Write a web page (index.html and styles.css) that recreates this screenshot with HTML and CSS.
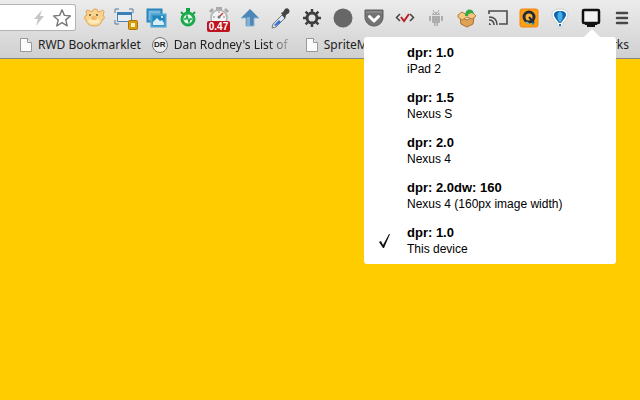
FILE: index.html
```
<!DOCTYPE html>
<html lang="en">
<head>
  <meta charset="UTF-8" />
  <meta name="viewport" content="width=device-width, initial-scale=1.0"/>
  <title>DPR Switcher</title>
  <link rel="stylesheet" href="styles.css">
</head>
<body>
  <header class="chrome">
    <div class="toolbar">
      <div class="omnibox">
        <input class="omnibox-input" type="text" aria-label="Address" />
        <svg width="14" height="18" viewBox="0 0 14 18"><path d="M10 1L2 10h4L4 17l8-10H8z" fill="#c6c6c6"/></svg>
        <button class="star-btn" aria-label="Bookmark this page">
          <svg width="20" height="20" viewBox="0 0 20 20"><path d="M10 1.800l2.400 5.600 6 .5-4.600 4 1.400 6L10 14.700 4.800 18l1.400-6-4.600-4 6-.6z" fill="#fff" stroke="#777" stroke-width="1.400" stroke-linejoin="round"/></svg>
        </button>
      </div>

      <!-- Extensions -->
      <div class="extensions">
        <button class="ext-btn" aria-label="Piggy">
          <svg width="22" height="22" viewBox="0 0 22 22"><path d="M2 4q2-2 4 0l2 1q1-4 4-3 2 0 2 3l3-1q3-2 3 1l-1 3q2 2 1 4-1 1-2 1c-1 5-4 6-8 6s-7-2-8-6q-2 0-1-4l2-1z" fill="#f8d48e" stroke="#dfa65c"/><ellipse cx="10" cy="14" rx="6" ry="3" fill="#fde9b8"/><ellipse cx="10" cy="11" rx="3" ry="2" fill="#f0b868"/><circle cx="6" cy="8" r="1" fill="#76502c"/><circle cx="13" cy="8" r="1" fill="#76502c"/></svg>
        </button>
        <button class="ext-btn" aria-label="Window resizer">
          <svg width="24" height="24" viewBox="0 0 24 24"><path d="M1 7V3h4M15 3h4v4M1 14v4h4" fill="none" stroke="#56799b"/><path d="M3.500 6.500h14v9h-14z" fill="#e8edf1" stroke="#4784b8"/><path d="M3 6h15v3H3z" fill="#3d7fb7"/><rect x="14.500" y="14.500" width="9" height="9" rx="1" fill="#d99b12" stroke="#aa740b"/><rect x="17" y="17" width="4" height="4" fill="#fff2b8"/></svg>
        </button>
        <button class="ext-btn" aria-label="Image viewer">
          <svg width="22" height="22" viewBox="0 0 22 22"><path d="M1.500 2.500h14v12h-14z" fill="#79b9dc" stroke="#2785bb" stroke-width="2"/><path d="M5.500 7.500h14v12h-14z" fill="#1e86bd" stroke="#4aa3d0" stroke-width="2"/><path d="M7 18v-3l4-4 3 3 2-1 2 3v2z" fill="#d8eef7"/><circle cx="16" cy="10" r="1" fill="#fff"/></svg>
        </button>
        <button class="ext-btn" aria-label="Page speed">
          <svg width="22" height="22" viewBox="0 0 22 22"><path d="M9 1h4v5H9z" fill="#199f48"/><path d="M4 5l3 3M18 5l-3 3" stroke="#199f48" stroke-width="2"/><circle cx="11" cy="12" r="6" fill="#e9fbe9" stroke="#1da94e" stroke-width="3"/><path d="M7 12h2l1-3 2 6 1-3h2" fill="none" stroke="#1da94e" stroke-width="1.500"/></svg>
        </button>
        <button class="ext-btn" aria-label="Page load time">
          <svg width="22" height="22" viewBox="0 0 22 22"><path d="M8 0h6v3H8zM1 4l3-3 2 2-3 3zM18 1l3 3-2 2-3-3z" fill="#aaa"/><circle cx="11" cy="11" r="8" fill="#f4f4f4" stroke="#b0b0b0" stroke-width="1.500"/><path d="M11 10l4-4" stroke="#cf3b38" stroke-width="1.500"/><path d="M5 10h2M11 4v2M15 10h2" stroke="#888"/><circle cx="11" cy="10" r="1.500" fill="#777"/></svg>
          <span class="badge">0.47</span>
        </button>
        <button class="ext-btn" aria-label="Up">
          <svg width="20" height="20" viewBox="0 0 20 20"><path d="M10 1l9 9h-5v8H6v-8H1z" fill="#4d87b8" stroke="#8ab3d2"/><path d="M7 9h3v9H7z" fill="#86b1d3"/></svg>
        </button>
        <button class="ext-btn" aria-label="Color picker">
          <svg width="22" height="22" viewBox="0 0 22 22"><path d="M3 17L12 8l3 3-9 9-4 1z" fill="#dce6f4" stroke="#777"/><path d="M4 18l5-5 2 2-5 4z" fill="#356ed4"/><path d="M11 6l2-1 2-3c2-2 6 1 4 4l-3 2-1 4z" fill="#424446"/></svg>
        </button>
        <button class="ext-btn" aria-label="Web developer">
          <svg width="18" height="18" viewBox="0 0 18 18"><circle cx="9" cy="9" r="5" fill="none" stroke="#3e3e3e" stroke-width="3"/><path d="M9 0v4M9 14v4M0 9h4M14 9h4M2.600 2.600l3 3M12.400 12.400l3 3M2.600 15.400l3-3M12.400 5.600l3-3" stroke="#3e3e3e" stroke-width="2.500"/></svg>
        </button>
        <button class="ext-btn" aria-label="Recorder">
          <svg width="20" height="20" viewBox="0 0 20 20"><circle cx="10" cy="10" r="9.500" fill="#676767"/></svg>
        </button>
        <button class="ext-btn" aria-label="Pocket">
          <svg width="20" height="18" viewBox="0 0 20 18"><path d="M1 1h18v7c0 5-4 9-9 9s-9-4-9-9z" fill="#737373" stroke="#5c5c5c"/><path d="M2 3h16" stroke="#999"/><path d="M5.500 7.500L10 12l4.500-4.500" fill="none" stroke="#fff" stroke-width="3" stroke-linecap="round" stroke-linejoin="round"/></svg>
        </button>
        <button class="ext-btn" aria-label="Validator">
          <svg width="20" height="12" viewBox="0 0 20 12"><path d="M5 2L1.500 5.500 5 9M15 2l3.500 3.500L15 9" fill="none" stroke="#454545" stroke-width="1.500"/><path d="M6 5l3 4 5-7" fill="none" stroke="#bd1e24" stroke-width="2"/></svg>
        </button>
        <button class="ext-btn" aria-label="Android">
          <svg width="14" height="16" viewBox="0 0 14 16"><path d="M3 6h8v6q0 1-1 1H9v3H7.500v-3h-1v3H5v-3H4q-1 0-1-1zM0 6h2v5H0zM12 6h2v5h-2zM3 5c0-4 8-4 8 0z" fill="#adadad"/><path d="M4 0l1 2M10 0L9 2" stroke="#adadad"/><path d="M5 3h1v1H5zM8 3h1v1H8z" fill="#eee"/></svg>
        </button>
        <button class="ext-btn" aria-label="Package">
          <svg width="22" height="20" viewBox="0 0 22 20"><path d="M4 9l7 3 7-3-1 7-6 3-6-3z" fill="#dfa354" stroke="#a96f2d"/><path d="M2 7l4-3 5 3 5-3 4 4-4 3-5-2-5 3-4-3z" fill="#f5c985" stroke="#b77d35"/><path d="M9 8c0-6 4-8 8-5l1 3c-4-2-6-1-6 2z" fill="#35a942"/></svg>
        </button>
        <button class="ext-btn" aria-label="Cast">
          <svg width="20" height="16" viewBox="0 0 20 16"><path d="M1 4V1h18v13h-8" fill="none" stroke="#4c4c4c" stroke-width="1.600"/><path d="M1 7c5 0 8 3 8 8M1 10c3 0 5 2 5 5" fill="none" stroke="#4c4c4c" stroke-width="1.500"/><path d="M1 13c1 0 2 1 2 2H1z" fill="#4c4c4c"/></svg>
        </button>
        <button class="ext-btn" aria-label="Search tool">
          <svg width="20" height="20" viewBox="0 0 20 20"><rect x="1" y="1" width="18" height="18" rx="2" fill="#ff9d13" stroke="#ef8610"/><circle cx="10" cy="9" r="5" fill="#ffb43d" stroke="#222c35" stroke-width="3"/><path d="M10 9l5 6" stroke="#222c35" stroke-width="2"/><path d="M7 14l3 2" stroke="#73b8b0" stroke-width="2"/><path d="M13 15l2 1" stroke="#1685b7" stroke-width="2"/></svg>
        </button>
        <button class="ext-btn" aria-label="Balloon">
          <svg width="18" height="20" viewBox="0 0 18 20"><path d="M9 1c5 0 8 2 8 6 0 3-3 6-5 8v3q-3 2-6 0v-3C4 13 1 10 1 7c0-4 3-6 8-6z" fill="#fff" stroke="#ccc"/><path d="M9 3c4 0 6 1 6 4 0 2-3 5-5 8H8C6 12 3 9 3 7c0-3 2-4 6-4z" fill="#0b64ad"/><path d="M9 3c4 3 3 8 0 12-3-4-4-9 0-12z" fill="#48aee4"/><path d="M8 16h2v2H8z" fill="#176da7"/></svg>
        </button>
        <button class="ext-btn" aria-label="DPR Switcher" aria-expanded="true">
          <svg width="20" height="20" viewBox="0 0 20 20"><rect x="2" y="2" width="16" height="13" rx="1" fill="#f2f2f2" stroke="#111" stroke-width="2.500"/><path d="M4 16h12v1h-2v2H6v-2H4z" fill="#111"/></svg>
        </button>
        <button class="ext-btn" aria-label="Menu">
          <svg width="14" height="14" viewBox="0 0 14 14"><path d="M2 2h10M2 7h10M2 12h10" stroke="#484848" stroke-width="2.500" stroke-linecap="round"/></svg>
        </button>
      </div>
    </div>

    <!-- Bookmarks -->
    <nav class="bookmarks">
      <a class="bookmark" href="#">
        <svg width="12" height="14" viewBox="0 0 12 14"><path d="M.5.5h7l4 4v9H.5z" fill="#fbfbfb" stroke="#999"/><path d="M7.500.5v4h4" fill="#eee" stroke="#999"/></svg>
        <span>RWD Bookmarklet</span>
      </a>
      <a class="bookmark" href="#">
        <span class="dr-icon">DR</span>
        <span class="fade">Dan Rodney's List of</span>
      </a>
      <a class="bookmark" href="#">
        <svg width="12" height="14" viewBox="0 0 12 14"><path d="M.5.5h7l4 4v9H.5z" fill="#fbfbfb" stroke="#999"/><path d="M7.500.5v4h4" fill="#eee" stroke="#999"/></svg>
        <span>SpriteMe</span>
      </a>
      <a class="bookmark other" href="#">Other Bookmarks</a>
    </nav>

    <!-- Popup -->
    <div class="popup" role="menu">
      <button class="option" role="menuitemradio" aria-checked="false"><b>dpr: 1.0</b><span>iPad 2</span></button>
      <button class="option" role="menuitemradio" aria-checked="false"><b>dpr: 1.5</b><span>Nexus S</span></button>
      <button class="option" role="menuitemradio" aria-checked="false"><b>dpr: 2.0</b><span>Nexus 4</span></button>
      <button class="option" role="menuitemradio" aria-checked="false"><b>dpr: 2.0dw: 160</b><span>Nexus 4 (160px image width)</span></button>
      <button class="option" role="menuitemradio" aria-checked="true">
        <svg class="check" width="12" height="14" viewBox="0 0 12 14"><path d="M0 8l2-1 2 4 6-11h1L5 14H4z" fill="#111"/></svg>
        <b>dpr: 1.0</b><span>This device</span>
      </button>
    </div>
  </header>

  <main class="page"></main>
</body>
</html>
```
FILE: styles.css
```
* {
  box-sizing: border-box;
}

body {
  margin: 0;
  min-height: 100vh;
  display: flex;
  flex-direction: column;
  font-family: "Liberation Sans", Arial, sans-serif;
  background: #ffcc00;
}

button {
  border: none;
  background: none;
  padding: 0;
  font-family: inherit;
  color: inherit;
}

svg {
  display: block;
  flex: none;
}

.chrome {
  position: relative;
  background: linear-gradient(#ececec, #d0d0d0);
  border-bottom: 1px solid #858585;
}

/* Toolbar */
.toolbar {
  display: flex;
  align-items: center;
  gap: 3px;
  height: 32px;
  padding: 3px 3px 0 0;
}

.omnibox {
  flex: 1;
  min-width: 0;
  height: 27px;
  display: flex;
  align-items: center;
  gap: 6px;
  padding-right: 3px;
  background: #fff;
  border: 1px solid #b4b4b4;
  border-left: none;
  border-radius: 0 3px 3px 0;
}

.omnibox-input {
  flex: 1;
  min-width: 0;
  border: none;
  outline: none;
  background: none;
}

.extensions {
  display: flex;
}

.ext-btn {
  position: relative;
  width: 31px;
  height: 28px;
  display: flex;
  align-items: center;
  justify-content: center;
}

.badge {
  position: absolute;
  left: 4px;
  bottom: 0;
  width: 23px;
  background: #bd1420;
  border-radius: 2px;
  color: #fff;
  font-size: 10px;
  font-weight: bold;
  line-height: 11px;
}

/* Bookmarks */
.bookmarks {
  display: flex;
  align-items: center;
  height: 26px;
  padding: 0 11px 0 20px;
  gap: 11px;
}

.bookmark {
  display: flex;
  align-items: center;
  gap: 6px;
  color: #222;
  font-family: "Noto Sans", "Open Sans", sans-serif;
  font-size: 12px;
  line-height: 16px;
  white-space: nowrap;
  text-decoration: none;
}

.dr-icon {
  width: 16px;
  height: 16px;
  border: 1px solid #777;
  border-radius: 50%;
  background: #eee;
  font-family: "Liberation Sans", Arial, sans-serif;
  font-size: 8px;
  font-weight: bold;
  line-height: 14px;
  text-align: center;
}

.fade {
  width: 121px;
  -webkit-mask-image: linear-gradient(90deg, #000 78%, transparent);
  mask-image: linear-gradient(90deg, #000 78%, transparent);
}

.other {
  margin-left: auto;
}

/* Popup */
.popup {
  position: absolute;
  top: 37px;
  right: 24px;
  width: 252px;
  display: flex;
  flex-direction: column;
  gap: 13px;
  padding: 8px 0 7px;
  background: #fff;
  border-radius: 3px;
}

.popup::before {
  content: "";
  position: absolute;
  top: -8px;
  right: 16px;
  border: 8px solid transparent;
  border-top: none;
  border-bottom-color: #fff;
}

.option {
  position: relative;
  display: flex;
  flex-direction: column;
  padding-left: 43px;
  color: #000;
  font-size: 12px;
  line-height: 16px;
  text-align: left;
}

.option b {
  font-size: 13px;
}

.check {
  position: absolute;
  left: 15px;
  top: 9px;
}

/* Page */
.page {
  flex: 1;
}
```
